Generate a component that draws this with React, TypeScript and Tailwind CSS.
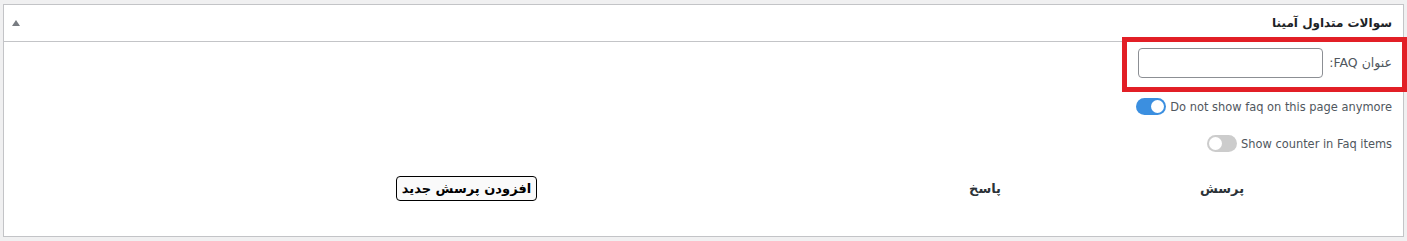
import React from "react";

function Toggle({ on }: { on: boolean }) {
  return (
    <span
      className={
        "relative inline-block w-[30px] h-[17px] rounded-full " +
        (on ? "bg-[#3b8fe0]" : "bg-[#cccccc]")
      }>
      <span
        className={
          "absolute top-[2px] w-[13px] h-[13px] rounded-full bg-white " +
          (on ? "left-[15px]" : "left-[2px]")
        }
      />
    </span>
  );
}

export default function App() {
  return (
    <div className="relative w-full h-[241px] bg-[#f0f0f1] pt-[4px] px-[3px] [font-family:'DejaVu_Sans',sans-serif]">
      <div className="h-[233px] w-[1401px] bg-white border border-[#c3c4c7]">
        {/* header */}
        <div className="h-[37px] border-b border-[#c3c4c7] flex items-center justify-between px-[8px]">
          <svg width="8" height="6" viewBox="0 0 8 6">
            <polygon points="4,0 8,6 0,6" fill="#787c82" />
          </svg>
          <h2 dir="rtl" className="text-[12px] font-bold text-[#1d2327] pr-[3px]">
            سوالات متداول آمینا
          </h2>
        </div>

        {/* body */}
        <div className="pr-[11px] pl-[11px]">
          <div dir="rtl" className="mt-[6px] h-[30px] flex items-center gap-[6px]">
            <label className="text-[12.5px] text-[#50575e]">عنوان FAQ:</label>
            <input
              type="text"
              className="w-[185px] h-[30px] border border-[#8c8f94] rounded-[4px] bg-white"
            />
          </div>

          <div className="mt-[20px] h-[17px] flex items-center justify-end gap-[4px]">
            <Toggle on={true} />
            <span className="text-[12.7px] text-[#50575e] [font-family:'DejaVu_Sans_Condensed',sans-serif]">
              Do not show faq on this page anymore
            </span>
          </div>

          <div className="mt-[20px] h-[17px] flex items-center justify-end gap-[4px]">
            <Toggle on={false} />
            <span className="text-[12.7px] text-[#50575e] [font-family:'DejaVu_Sans_Condensed',sans-serif]">
              Show counter in Faq items
            </span>
          </div>

          <div dir="rtl" className="mt-[24px] h-[25px] flex items-center text-[13px] text-[#2c3338] font-semibold">
            <div className="w-[340px] text-center">پرسش</div>
            <div className="w-[134px] text-center">پاسخ</div>
            <div className="flex-1 flex justify-center">
              <button className="h-[25px] px-[5px] border border-black rounded-[4px] bg-[#fafafa] text-[13px] font-bold text-black">
                افزودن پرسش جدید
              </button>
            </div>
          </div>
        </div>
      </div>

      {/* annotation highlight */}
      <div className="absolute left-[1122px] top-[37px] w-[285px] h-[55px] border-[5px] border-[#e21f26]" />
    </div>
  );
}
